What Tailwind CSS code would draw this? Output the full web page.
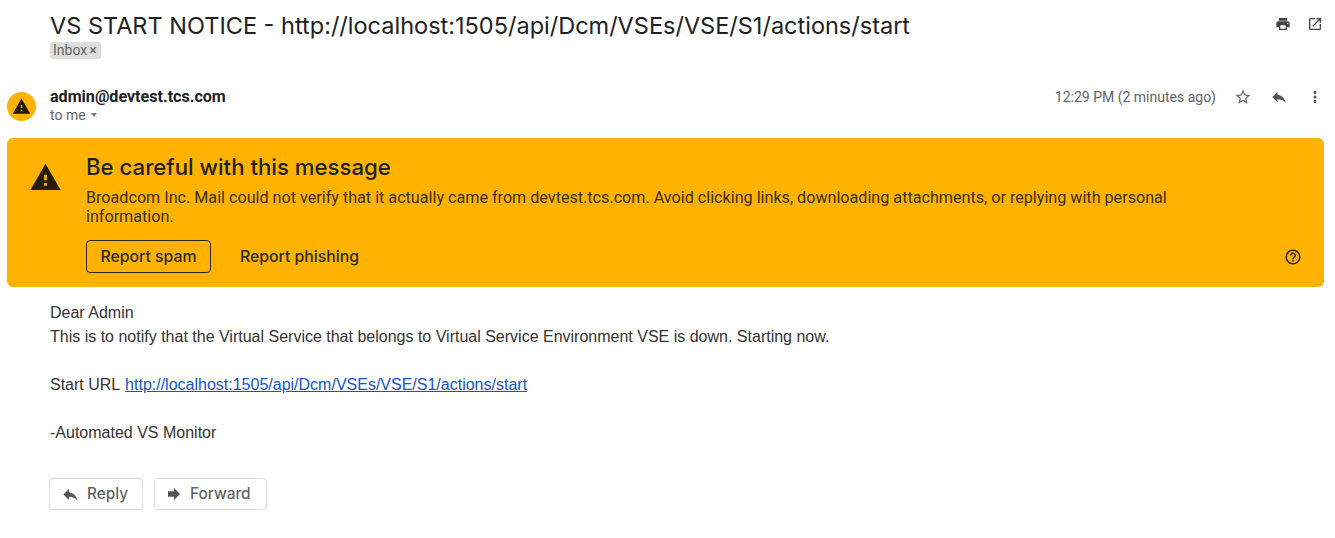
<!DOCTYPE html>
<html>
<head>
<meta charset="utf-8">
<script src="https://cdn.jsdelivr.net/npm/@tailwindcss/browser@4"></script>
</head>
<body class="bg-white font-['Roboto',sans-serif] text-[#222]">
<div class="w-[1335px] h-[538px] overflow-hidden">
  <div class="flex justify-between pl-[50px] pr-[12px] pt-[11px] h-[60px]">
    <div>
      <h1 class="font-['Inter',sans-serif] text-[23.5px] leading-[30px] text-[#202124] font-normal whitespace-nowrap">VS START NOTICE - http://localhost:1505/api/Dcm/VSEs/VSE/S1/actions/start</h1>
      <span class="flex w-[51px] items-center h-[17px] mt-[1px] px-[3px] rounded-[3px] bg-[#dddddd] text-[#666] text-[14px] leading-[17px]">Inbox<span class="ml-[2px] text-[14px]">×</span></span>
    </div>
    <div class="flex gap-[16px] mt-[5px] h-[16px]">
      <svg class="w-[16px] h-[16px]" viewBox="0 0 24 24" fill="#444"><path d="M19 8H5c-1.66 0-3 1.34-3 3v6h4v4h12v-4h4v-6c0-1.66-1.34-3-3-3zm-3 11H8v-5h8v5zm3-7c-.55 0-1-.45-1-1s.45-1 1-1 1 .45 1 1-.45 1-1 1zm-1-9H6v4h12V3z"/></svg>
      <svg class="w-[16px] h-[16px]" viewBox="0 0 24 24" fill="#444"><path d="M19 19H5V5h7V3H5c-1.11 0-2 .9-2 2v14c0 1.1.89 2 2 2h14c1.1 0 2-.9 2-2v-7h-2v7zM14 3v2h3.59l-9.83 9.83 1.41 1.41L19 6.41V10h2V3h-7z"/></svg>
    </div>
  </div>
  <div class="flex justify-between items-start h-[72px] pl-[7px] pr-[11px] pt-[27px]">
    <div class="flex">
      <div class="w-[29px] h-[29px] mt-[5px] rounded-full bg-[#ffb300] flex items-center justify-center">
        <svg class="w-[19px] h-[19px]" viewBox="0 0 24 24" fill="#1f1a05"><path d="M1 21h22L12 2 1 21zm12-3h-2v-2h2v2zm0-4h-2v-4h2v4z"/></svg>
      </div>
      <div class="ml-[14px]">
        <div class="mt-[1px] text-[16.1px] leading-[18px] font-bold text-[#202124] whitespace-nowrap">admin@devtest.tcs.com</div>
        <div class="flex items-center text-[14px] leading-[18px] text-[#5f6368]">to me<span class="ml-[5px] w-0 h-0 border-x-[3.5px] border-x-transparent border-t-[4px] border-t-[#777]"></span></div>
      </div>
    </div>
    <div class="flex items-center h-[18px] mt-[1px] text-[#5f6368]">
      <span class="text-[14px] leading-[18px] whitespace-nowrap">12:29 PM (2 minutes ago)</span>
      <svg class="w-[18px] h-[18px] ml-[18px]" viewBox="0 0 24 24" fill="#666"><path d="M22 9.24l-7.19-.62L12 2 9.19 8.63 2 9.24l5.46 4.73L5.82 21 12 17.27 18.18 21l-1.63-7.03L22 9.24zM12 15.4l-3.76 2.27 1-4.28-3.32-2.88 4.38-.38L12 6.1l1.71 4.04 4.38.38-3.32 2.88 1 4.28L12 15.4z"/></svg>
      <svg class="w-[18px] h-[18px] ml-[18px]" viewBox="0 0 24 24" fill="#555"><path d="M10 9V5l-7 7 7 7v-4.1c5 0 8.5 1.6 11 5.1-1-5-4-10-11-11z"/></svg>
      <svg class="w-[18px] h-[18px] ml-[18px]" viewBox="0 0 24 24" fill="#555"><path d="M12 8c1.1 0 2-.9 2-2s-.9-2-2-2-2 .9-2 2 .9 2 2 2zm0 2c-1.1 0-2 .9-2 2s.9 2 2 2 2-.9 2-2-.9-2-2-2zm0 6c-1.1 0-2 .9-2 2s.9 2 2 2 2-.9 2-2-.9-2-2-2z"/></svg>
    </div>
  </div>
  <div class="relative mx-[7px] mt-[6px] w-[1317px] h-[149px] rounded-[6px] bg-[#ffb300] flex">
    <div class="w-[79px] pl-[22px] pt-[23px] shrink-0">
      <svg class="w-[33px] h-[33px]" viewBox="0 0 24 24" fill="#251c04"><path d="M1 21h22L12 2 1 21zm12-3h-2v-2h2v2zm0-4h-2v-4h2v4z"/></svg>
    </div>
    <div class="w-[1110px] pt-[15px]">
      <div class="font-['Inter',sans-serif] text-[22.2px] leading-[28px] font-medium text-[#202124]">Be careful with this message</div>
      <p class="mt-[7px] text-[16.15px] leading-[19px] text-[#3a2f10]">Broadcom Inc. Mail could not verify that it actually came from devtest.tcs.com. Avoid clicking links, downloading attachments, or replying with personal information.</p>
      <div class="flex items-center mt-[14px] font-['Inter',sans-serif] text-[15.8px] font-medium text-[#2b2a22]">
        <span class="flex items-center justify-center w-[125px] h-[33px] border border-[#2b2a22] rounded-[4px]">Report spam</span>
        <span class="ml-[29px]">Report phishing</span>
      </div>
    </div>
    <svg class="absolute right-[22px] top-[110px] w-[18px] h-[18px]" viewBox="0 0 24 24" fill="#2b2205"><path d="M11 18h2v-2h-2v2zm1-16C6.48 2 2 6.48 2 12s4.48 10 10 10 10-4.48 10-10S17.52 2 12 2zm0 18c-4.41 0-8-3.59-8-8s3.59-8 8-8 8 3.59 8 8-3.59 8-8 8zm0-14c-2.21 0-4 1.79-4 4h2c0-1.1.9-2 2-2s2 .9 2 2c0 2-3 1.75-3 5h2c0-2.25 3-2.5 3-5 0-2.21-1.79-4-4-4z"/></svg>
  </div>
  <div class="pl-[50px] pt-[14px] font-['Liberation_Sans',sans-serif] text-[16px] leading-[24px] text-[#333]">
    <div>Dear Admin</div>
    <div>This is to notify that the Virtual Service that belongs to Virtual Service Environment VSE is down. Starting now.</div>
    <div class="h-[24px]"></div>
    <div>Start URL <a class="ml-[1px] text-[#1155cc] underline">http://localhost:1505/api/Dcm/VSEs/VSE/S1/actions/start</a></div>
    <div class="h-[24px]"></div>
    <div>-Automated VS Monitor</div>
  </div>
  <div class="flex gap-[11px] pl-[49px] mt-[33px] font-['Inter',sans-serif] text-[15.4px] font-medium text-[#5f6368]">
    <span class="flex items-center w-[94px] h-[32px] border border-[#dadce0] rounded-[4px] pl-[11px]">
      <svg class="w-[19px] h-[19px] mr-[7px]" viewBox="0 0 24 24" fill="#555"><path d="M10 9V5l-7 7 7 7v-4.1c5 0 8.5 1.6 11 5.1-1-5-4-10-11-11z"/></svg>Reply</span>
    <span class="flex items-center w-[113px] h-[32px] border border-[#dadce0] rounded-[4px] pl-[11px]">
      <svg class="w-[16px] h-[16px] mr-[8px]" viewBox="0 0 24 24" fill="#555"><path d="M12 8V3l9 9-9 9v-5H3V8h9z"/></svg>Forward</span>
  </div>
</div>
</body>
</html>
